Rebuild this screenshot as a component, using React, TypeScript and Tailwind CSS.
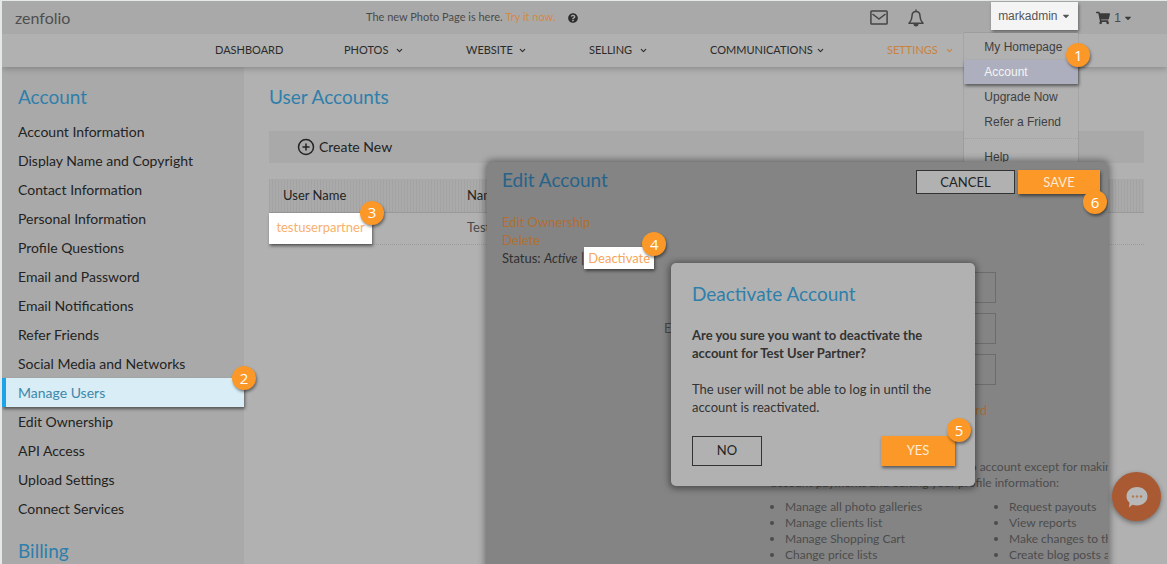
import { ReactNode } from 'react'
import { ChevronDown, CirclePlus } from 'lucide-react'
import { FaCaretDown, FaQuestionCircle, FaShoppingCart } from 'react-icons/fa'

const mainNav = [
  { label: 'DASHBOARD', width: 'w-[67px]' },
  { label: 'PHOTOS', width: 'w-[60px]', menu: true },
  { label: 'WEBSITE', width: 'w-[61px]', menu: true },
  { label: 'SELLING', width: 'w-[59px]', menu: true },
  { label: 'COMMUNICATIONS', width: 'w-[115px]', menu: true },
  { label: 'SETTINGS', width: 'w-[67px]', menu: true, active: true },
]

const sideLinks = [
  'Account Information',
  'Display Name and Copyright',
  'Contact Information',
  'Personal Information',
  'Profile Questions',
  'Email and Password',
  'Email Notifications',
  'Refer Friends',
  'Social Media and Networks',
  'Manage Users',
  'Edit Ownership',
  'API Access',
  'Upload Settings',
  'Connect Services',
]

const allowed = ['Manage all photo galleries', 'Manage clients list', 'Manage Shopping Cart', 'Change price lists']
const denied = ['Request payouts', 'View reports', 'Make changes to the account', 'Create blog posts and pages']

function Step({ n, className }: { n: number; className: string }) {
  return (
    <span
      className={`absolute z-10 flex size-6 items-center justify-center rounded-full bg-[#fb9828] font-['Open_Sans',sans-serif] text-[15px] leading-none text-white shadow-[1px_2px_3px_rgba(0,0,0,0.45)] ${className}`}
    >
      {n}
    </span>
  )
}

function MailIcon() {
  return (
    <svg viewBox="0 0 18 15" className="h-[15px] w-[18px]" fill="none" stroke="#444" strokeWidth="1.5" strokeLinejoin="round">
      <rect x="0.9" y="0.9" width="16.2" height="13.2" rx="0.8" />
      <path d="M2.5 4L9 9l6.500-5" />
    </svg>
  )
}

function BellIcon() {
  return (
    <svg viewBox="0 0 16 18" className="h-[18px] w-4" fill="none" stroke="#444" strokeWidth="1.5" strokeLinejoin="round">
      <path d="M8 .5v2C5.300 2.500 4 4.800 4 7.300 4 11 2.700 12.500 1 14.300h14c-1.700-1.800-3-3.300-3-7C12 4.800 10.700 2.500 8 2.500" />
      <path d="M6.200 14.800c0 2.500 3.600 2.500 3.600 0z" fill="#444" />
    </svg>
  )
}

function TopBar() {
  return (
    <header className="flex h-[33px] items-center bg-[#a9a9a9] text-[#4a4a4a]">
      <a href="#" className="w-[364px] pl-[13px] text-base leading-5 text-[#4f4f4f]">
        zenfolio
      </a>
      <p className="flex items-center text-[11px]">
        The new Photo Page is here.&nbsp;
        <a href="#" className="text-[#d38a45]">Try it now.</a>
        <FaQuestionCircle className="ml-3 size-[10px] text-[#2d2d2d]" />
      </p>
      <div className="ml-auto flex items-center self-stretch">
        <MailIcon />
        <span className="ml-5">
          <BellIcon />
        </span>
        <div className="relative ml-[67px] mt-px h-[28px] self-start font-['Liberation_Sans',sans-serif] text-xs">
          <button className="flex h-full w-[87px] items-center justify-center gap-1 bg-[#f4f4f4] text-[#555] shadow-[1px_2px_3px_rgba(0,0,0,0.4)]">
            markadmin
            <FaCaretDown className="size-[10px]" />
          </button>
          <AccountMenu />
        </div>
        <button className="ml-[18px] mr-[34px] flex items-center font-['Liberation_Sans',sans-serif] text-xs">
          <FaShoppingCart className="mr-1 size-[14px] text-[#3b3b3b]" />1
          <FaCaretDown className="ml-0.5 size-[10px] text-[#3b3b3b]" />
        </button>
      </div>
    </header>
  )
}

function AccountMenu() {
  return (
    <nav className="absolute right-0 top-[31px] h-[135px] w-[114px] bg-[#b1b1b1] text-[#3f3f3f] shadow-[0_0_1px_rgba(0,0,0,0.4)]">
      <a href="#" className="flex h-[27px] items-center pl-5">My Homepage</a>
      <div className="relative">
        <a href="#" className="flex h-6 items-center bg-[#adafbe] pl-5 text-[#f4f4f4] shadow-[1px_2px_3px_rgba(0,0,0,0.5)]">
          Account
        </a>
        <Step n={1} className="-right-3 -top-[17px]" />
      </div>
      <a href="#" className="flex h-[25px] items-center pl-5">Upgrade Now</a>
      <a href="#" className="flex h-[25px] items-center pl-5">Refer a Friend</a>
      <a href="#" className="mt-1 flex h-[36px] items-center border-t border-dotted border-[#a2a2a2] pl-5">Help</a>
    </nav>
  )
}

function MainNav() {
  return (
    <nav className="relative flex h-[33px] shrink-0 items-center justify-center gap-[62px] bg-[#b1b1b1] text-[11px] text-[#2b2b2b] shadow-[0_2px_6px_rgba(0,0,0,0.22)]">
      {mainNav.map((item) => (
        <a
          key={item.label}
          href="#"
          className={`flex items-center justify-between whitespace-nowrap ${item.width} ${item.active ? 'text-[#c98240]' : ''}`}
        >
          {item.label}
          {item.menu && <ChevronDown className="size-[9px] shrink-0" strokeWidth={3} />}
        </a>
      ))}
    </nav>
  )
}

function Sidebar() {
  return (
    <aside className="w-[242px] shrink-0 bg-[#a9a9a9] pt-4 text-sm text-[#232323]">
      <h2 className="pl-4 text-[19px] leading-7 text-[#2f7fab]">Account</h2>
      <ul className="mt-1.5">
        {sideLinks.map((label) => (
          <li key={label} className="relative">
            {label === 'Manage Users' ? (
              <>
                <a
                  href="#"
                  className="flex h-[29px] items-center border-l-4 border-[#1ba4ea] bg-[#d8edf5] pl-3 text-[#3f87ab] shadow-[1px_2px_3px_rgba(0,0,0,0.5)]"
                >
                  {label}
                </a>
                <Step n={2} className="-right-3 -top-3" />
              </>
            ) : (
              <a href="#" className="flex h-[29px] items-center pl-4">{label}</a>
            )}
          </li>
        ))}
      </ul>
      <h2 className="mt-3.5 pl-4 text-[19px] leading-7 text-[#2f7fab]">Billing</h2>
    </aside>
  )
}

function Users() {
  return (
    <main className="flex-1 pl-[25px] pr-[23px] pt-4 text-[#232323]">
      <h1 className="text-[19px] leading-7 text-[#2f7fab]">User Accounts</h1>
      <div className="mt-5 bg-[#a9a9a9] pl-7">
        <button className="flex h-8 items-center gap-1 text-sm">
          <CirclePlus className="size-[18px]" strokeWidth={2} />
          Create New
        </button>
      </div>
      <table className="mt-4 w-full text-left text-[13px]">
        <thead>
          <tr className="h-[33px] border-b border-[#999] bg-[repeating-linear-gradient(90deg,#a3a3a3_0_1px,#aaaaaa_1px_3px)]">
            <th className="w-[198px] pl-[14px] font-normal">User Name</th>
            <th className="font-normal">Name</th>
          </tr>
        </thead>
        <tbody>
          <tr className="h-8 border-b border-dotted border-[#9c9c9c]">
            <td>
              <div className="relative w-[103px]">
                <a href="#" className="flex h-[31px] items-center justify-center bg-white text-[#f8b06c] shadow-[1px_2px_3px_rgba(0,0,0,0.5)]">
                  testuserpartner
                </a>
                <Step n={3} className="-right-3 -top-3" />
              </div>
            </td>
            <td className="text-[#4a4a4a]">Test User Partner</td>
          </tr>
        </tbody>
      </table>
    </main>
  )
}

function Field({ id, label }: { id: string; label: string }) {
  return (
    <div className="flex items-center gap-4">
      <label htmlFor={id} className="w-[82px] whitespace-nowrap text-right text-[13px] text-[#4a4a4a]">{label}</label>
      <input id={id} className="h-[31px] flex-1 border border-[#6c6c6c] bg-transparent px-2 text-xs" />
    </div>
  )
}

function Bullets({ items }: { items: string[] }) {
  return (
    <ul className="w-[224px] shrink-0 list-disc pl-[14px]">
      {items.map((item) => (
        <li key={item}>{item}</li>
      ))}
    </ul>
  )
}

function EditAccount() {
  return (
    <section className="absolute left-[487px] right-[59px] top-[162px] overflow-hidden rounded-t-md bg-[#848484] shadow-[0_0_7px_2px_rgba(0,0,0,0.4)]">
      <div className="flex min-h-[420px] flex-col pl-[15px] pr-2 pt-2 text-[#303030]">
        <div className="flex items-start gap-[3px]">
          <h2 className="mr-auto text-[19px] leading-5 text-[#27638a]">Edit Account</h2>
          <button className="h-6 w-[99px] border border-[#333] bg-[#b1b1b1] text-[13px] leading-none text-[#232323]">CANCEL</button>
          <div className="relative">
            <button className="block h-6 w-[82px] bg-[#fb9828] text-[13px] leading-none text-[#fdebd4] shadow-[1px_2px_3px_rgba(0,0,0,0.5)]">SAVE</button>
            <Step n={6} className="-right-[7px] top-5" />
          </div>
        </div>
        <div className="mt-[19px] text-[13px] leading-[18px]">
          <a href="#" className="block w-fit text-[#b06f33]">Edit Ownership</a>
          <a href="#" className="block w-fit text-[#b06f33]">Delete</a>
          <p className="flex h-[18px] items-center whitespace-pre">
            Status: <i>Active</i> |
            <span className="relative">
              <a href="#" className="flex h-[22px] w-[70px] items-center justify-center bg-white text-[#f8a65a] shadow-[1px_2px_3px_rgba(0,0,0,0.5)]">
                Deactivate
              </a>
              <Step n={4} className="-right-3 -top-[15px]" />
            </span>
          </p>
        </div>
        <form className="ml-[162px] mt-[5px] flex w-[332px] flex-col gap-[10px]">
          <Field id="name" label="Name:" />
          <Field id="email" label="Email Address:" />
          <Field id="password" label="Password:" />
        </form>
        <a href="#" className="ml-auto mr-[113px] mt-4 text-[13px] leading-[18px] text-[#a86a34]">Change Password</a>
        <div className="ml-[269px] mt-10 whitespace-nowrap text-xs leading-4 text-[#4c4c4c]">
          <p>This user has full access to the Zenfolio account except for making</p>
          <p>account payments and editing your profile information:</p>
          <div className="mt-2 flex">
            <Bullets items={allowed} />
            <Bullets items={denied} />
          </div>
        </div>
      </div>
    </section>
  )
}

function ConfirmDialog({ children }: { children: ReactNode }) {
  return (
    <section
      role="dialog"
      aria-label="Deactivate Account"
      className="absolute left-[671px] top-[263px] w-[304px] rounded-[5px] bg-[#b1b1b1] px-5 pb-5 pt-[19px] shadow-[0_1px_6px_2px_rgba(0,0,0,0.4)]"
    >
      <h2 className="pl-px text-[19px] leading-6 text-[#2f7fab]">Deactivate Account</h2>
      <div className="pl-px text-[13px] leading-[18px] text-[#333]">{children}</div>
      <div className="mt-5 flex justify-between pl-px text-[13px]">
        <button className="h-[30px] w-[70px] border border-[#333] text-[#232323]">NO</button>
        <div className="relative">
          <button className="block h-[30px] w-[74px] bg-[#fb9828] text-[#fdebd4] shadow-[1px_2px_3px_rgba(0,0,0,0.5)]">YES</button>
          <Step n={5} className="-right-4 -top-[18px]" />
        </div>
      </div>
    </section>
  )
}

export default function App() {
  return (
    <div className="relative flex h-screen flex-col overflow-hidden border-l-2 border-t border-[#e4e8e8] bg-[#b1b1b1] font-[Lato,sans-serif]">
      <div className="relative z-10">
        <TopBar />
      </div>
      <MainNav />
      <div className="flex flex-1">
        <Sidebar />
        <Users />
      </div>

      <div className="absolute -left-0.5 -top-px right-0 z-20">
        <EditAccount />
        <ConfirmDialog>
          <p className="mt-5 font-bold">Are you sure you want to deactivate the account for Test User Partner?</p>
          <p className="mt-[18px]">The user will not be able to log in until the account is reactivated.</p>
        </ConfirmDialog>
      </div>

      {/* Chat launcher */}
      <button
        aria-label="Open chat"
        className="absolute bottom-[43px] right-1.5 z-30 flex size-[49px] items-center justify-center rounded-full bg-[#a95a33] shadow-[0_2px_5px_rgba(0,0,0,0.4)]"
      >
        <svg viewBox="0 0 24 24" className="size-6">
          <path d="M12 2c6 0 10.500 4 10.500 9.300S18 20.500 12 20.500c-1.700 0-3.200-.2-4.600-.8L4 22.500l.5-4.800C2.400 16 1.500 13.800 1.500 11.300 1.500 6 6 2 12 2z" fill="#b8b8b8" />
          <circle cx="8" cy="11.500" r="1.200" fill="#b57a50" />
          <circle cx="12" cy="11.500" r="1.200" fill="#b57a50" />
          <circle cx="16" cy="11.500" r="1.200" fill="#b57a50" />
        </svg>
      </button>
    </div>
  )
}
